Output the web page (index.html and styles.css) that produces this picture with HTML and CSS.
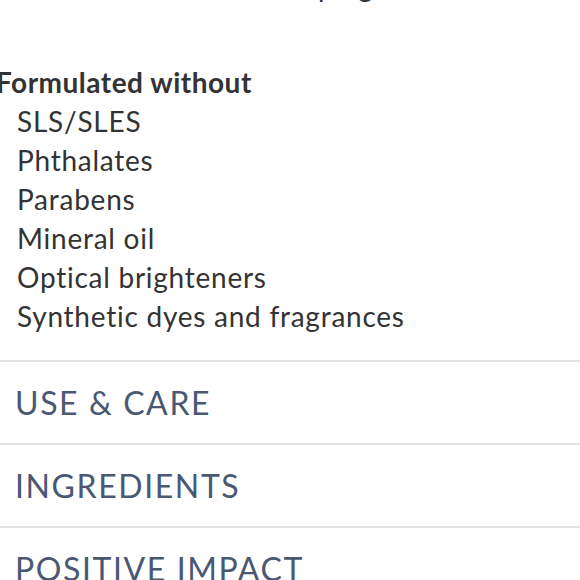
FILE: index.html
```html
<!DOCTYPE html>
<html lang="en">
<head>
<meta charset="utf-8">
<title>Product details</title>
<link rel="stylesheet" href="styles.css">
</head>
<body>
<main class="page">
  <section class="details">
    <p class="clipped-line"><span class="clip-word">plug</span></p>
    <h3 class="without-title">Formulated without</h3>
    <ul class="without-list">
      <li>SLS/SLES</li>
      <li>Phthalates</li>
      <li>Parabens</li>
      <li>Mineral oil</li>
      <li>Optical brighteners</li>
      <li>Synthetic dyes and fragrances</li>
    </ul>
  </section>
  <div class="accordion">
    <div class="acc-item"><span class="acc-title">USE &amp; CARE</span></div>
    <div class="acc-item"><span class="acc-title">INGREDIENTS</span></div>
    <div class="acc-item"><span class="acc-title">POSITIVE IMPACT</span></div>
  </div>
</main>
</body>
</html>
```

FILE: styles.css
```css
html, body {
  margin: 0;
  padding: 0;
  background: #ffffff;
  overflow: hidden;
}
body {
  font-family: Lato, "Noto Sans", sans-serif;
  color: #333333;
  font-variant-ligatures: none;
}
.page {
  width: 580px;
  height: 580px;
  overflow: hidden;
}
.clipped-line {
  margin: -33px 0 0 0;
  font-size: 28px;
  line-height: 39px;
  padding-left: 318px;
  letter-spacing: 0.75px;
  color: #333333;
}
.without-title {
  margin: 57px 0 0 -4px;
  font-size: 28px;
  line-height: 39px;
  font-weight: 700;
  letter-spacing: 0.5px;
  color: #333333;
}
.without-list {
  list-style: none;
  margin: 0;
  padding: 0 0 0 17px;
  font-size: 28px;
  line-height: 39px;
  font-weight: 400;
  letter-spacing: 0.75px;
}
.accordion {
  margin-top: 24px;
}
.acc-item {
  border-top: 2px solid #e2e2e2;
  height: 81px;
  display: flex;
  align-items: center;
  padding-left: 15px;
}
.acc-title {
  font-size: 32px;
  letter-spacing: 1.6px;
  color: #4a5873;
  font-weight: 400;
}
```
